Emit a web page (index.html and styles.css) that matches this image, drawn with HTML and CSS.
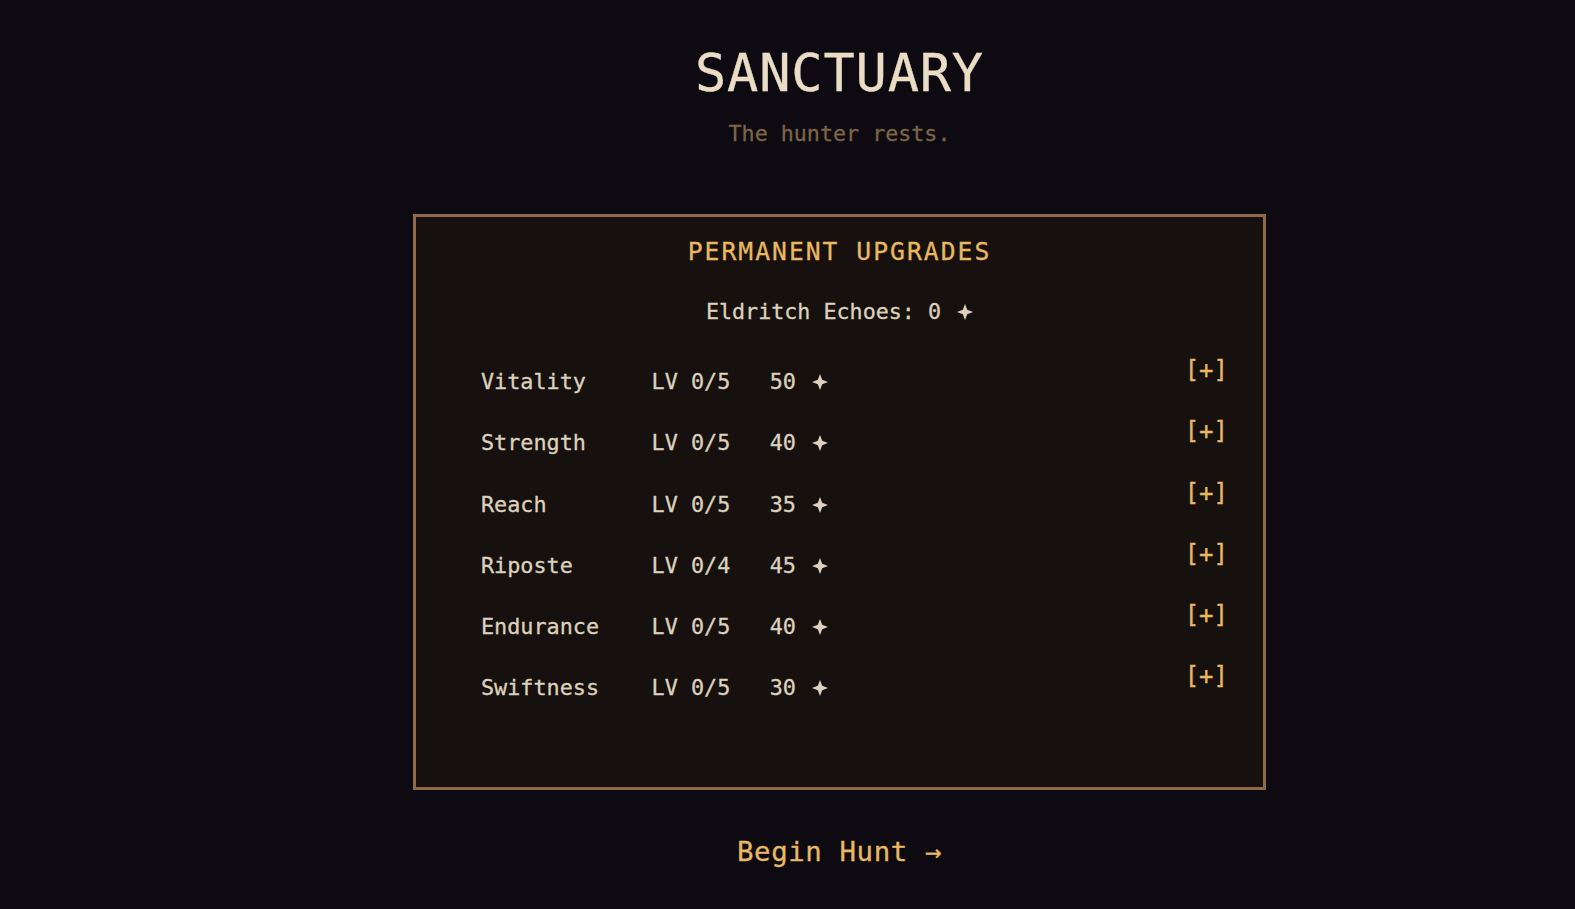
FILE: index.html
```html
<!DOCTYPE html>
<html lang="en">
<head>
    <meta charset="UTF-8">
    <meta name="viewport" content="width=device-width, initial-scale=1.0">
    <title>Sanctuary</title>
    <link rel="stylesheet" href="styles.css">
</head>
<body>

<div class="sanctuary">
    <h1 class="title">SANCTUARY</h1>
    <p class="subtitle">The hunter rests.</p>

    <div class="upgrades">
        <h2>PERMANENT UPGRADES</h2>
        <p class="echoes">Eldritch Echoes: <span id="echoCount">0</span> <svg class="echo" viewBox="0 0 16 16"><path d="M8 0 L10.2 5.8 L16 8 L10.2 10.2 L8 16 L5.8 10.2 L0 8 L5.8 5.8 Z"/></svg></p>

        <div id="upgradeList">
            <!-- Upgrade rows are built below -->
        </div>
    </div>

    <button class="begin-btn" id="beginHunt">Begin Hunt &rarr;</button>
</div>

<script>
    const upgrades = [
        { name: 'Vitality',  level: 0, max: 5, cost: 50 },
        { name: 'Strength',  level: 0, max: 5, cost: 40 },
        { name: 'Reach',     level: 0, max: 5, cost: 35 },
        { name: 'Riposte',   level: 0, max: 4, cost: 45 },
        { name: 'Endurance', level: 0, max: 5, cost: 40 },
        { name: 'Swiftness', level: 0, max: 5, cost: 30 }
    ];

    let echoes = 0;

    // Four-point star used as the echo currency mark
    const echoIcon = '<svg class="echo" viewBox="0 0 16 16"><path d="M8 0 L10.2 5.8 L16 8 L10.2 10.2 L8 16 L5.8 10.2 L0 8 L5.8 5.8 Z"/></svg>';

    // Build one row per upgrade
    function renderUpgrades() {
        const list = document.getElementById('upgradeList');
        list.innerHTML = '';

        upgrades.forEach((up, i) => {
            const row = document.createElement('div');
            row.classList.add('upgrade-row');

            row.innerHTML = `
                <div class="upgrade-info">
                    <span class="up-name">${up.name}</span>
                    <span class="up-level">LV ${up.level}/${up.max}</span>
                    <span class="up-cost">${up.cost} ${echoIcon}</span>
                </div>
                <button class="buy-btn" data-index="${i}">[+]</button>
            `;

            list.appendChild(row);
        });

        document.getElementById('echoCount').textContent = echoes;
    }

    document.getElementById('upgradeList').addEventListener('click', function (e) {
        const btn = e.target.closest('.buy-btn');
        if (!btn) return;

        const up = upgrades[btn.dataset.index];
        if (echoes < up.cost || up.level >= up.max) return;  // Not enough echoes

        echoes -= up.cost;
        up.level++;
        renderUpgrades();
    });

    renderUpgrades();
</script>

</body>
</html>
```

FILE: styles.css
```css
body {
    margin: 0;
    background-color: #0d0b11;
    font-family: "DejaVu Sans Mono", "Liberation Mono", monospace;
    color: #ddd1bd;
    -webkit-text-stroke: 0.3px currentColor;
}
.sanctuary {
    display: flex;
    flex-direction: column;
    align-items: center;
    padding-left: 104px;
}
.title {
    margin: 43px 0 0;
    font-size: 52px;
    line-height: 60px;
    font-weight: normal;
    letter-spacing: 0.8px;
    color: #eadcc5;
}
.subtitle {
    margin: 18px 0 0;
    font-size: 21.7px;
    line-height: 26px;
    color: #7d6446;
}
.upgrades {
    box-sizing: border-box;
    width: 853px;
    margin-top: 67px;
    padding: 20px 0 62px;
    border: 3px solid #8c6a4a;
    background-color: #16110f;
}
.upgrades h2 {
    margin: 0;
    text-align: center;
    font-size: 24.7px;
    line-height: 30px;
    font-weight: normal;
    letter-spacing: 2px;
    color: #e8b862;
}
.echoes {
    margin: 32px 0 32px;
    text-align: center;
    font-size: 21.7px;
    line-height: 26px;
}
.echo {
    width: 16px;
    height: 16px;
    margin-left: 3px;
    vertical-align: -1px;
    fill: currentColor;
}
#upgradeList {
    padding: 0 35px 0 65px;
}
.upgrade-row {
    display: flex;
    align-items: flex-start;
    height: 61.25px;
}
.upgrade-info {
    display: grid;
    grid-template-columns: 13ch 9ch auto;
    margin-top: 12px;
    font-size: 21.8px;
    line-height: 26px;
}
.buy-btn {
    margin-left: auto;
    padding: 0;
    border: none;
    background: none;
    font-family: inherit;
    font-size: 24px;
    line-height: 26px;
    color: #e8b862;
    cursor: pointer;
}
.buy-btn:hover {
    color: #ffd98a;
}
.begin-btn {
    margin-top: 46px;
    padding: 0;
    border: none;
    background: none;
    font-family: inherit;
    font-size: 27.4px;
    line-height: 32px;
    letter-spacing: 0.6px;
    color: #e8b862;
    cursor: pointer;
}
.begin-btn:hover {
    color: #ffd98a;
}
```
